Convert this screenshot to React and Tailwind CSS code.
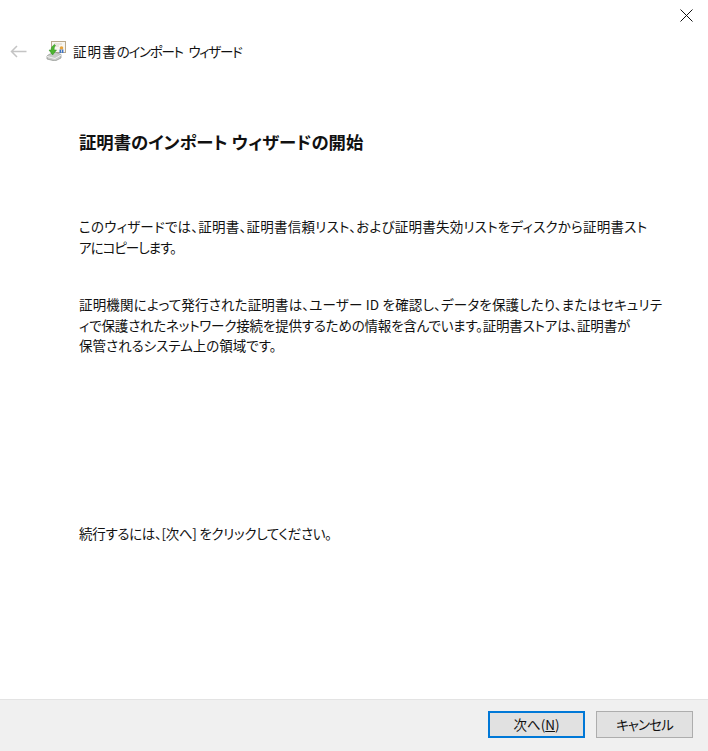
import React from "react";

const FONT = "font-['Noto_Sans_CJK_JP','Noto_Sans',sans-serif] [font-feature-settings:'palt']";

function WizardIcon() {
  return (
    <svg width="20" height="20" viewBox="0 0 20 20" className="block">
      {/* certificate */}
      <rect x="5.5" y="0.5" width="14" height="11" fill="#f8f6f0" stroke="#b9a98c" />
      <path d="M8 3h8M8 5h5" stroke="#d8d2c4" />
      <circle cx="15.5" cy="7" r="1.8" fill="#e8a33a" />
      <rect x="13.5" y="8.5" width="1.6" height="3.5" fill="#3f74c4" />
      <rect x="15.8" y="8.5" width="1.6" height="3.5" fill="#3f74c4" />
      {/* drive */}
      <path d="M3 13.5 L9 11 L15 13.5 L15 17 L9 20 L1 18 L1 15 Z" fill="#c9cbc8" stroke="#8d918d" strokeWidth="0.7" />
      <path d="M1 15.5 L9 17.5 L15 14" stroke="#f2f2f2" fill="none" />
      {/* green arrow */}
      <path d="M8.5 3.5 C6 5 5 7 5.2 9 L3 9 L6.6 14 L10.5 9 L8.2 9 C8 7.5 8.4 5.5 9.5 4.5 Z" fill="#4cb52f" stroke="#2f8f1d" strokeWidth="0.5" />
    </svg>
  );
}

export default function App() {
  return (
    <div className={`flex flex-col w-[708px] h-[751px] bg-white text-[#111] ${FONT}`}>
      {/* close button row */}
      <div className="flex justify-end h-[30px] pt-[9px] pr-[15px]">
        <svg width="13" height="13" viewBox="0 0 13 13" className="block">
          <path d="M0.5 0.5L12.5 12.5M12.5 0.5L0.5 12.5" stroke="#111" strokeWidth="1" fill="none" />
        </svg>
      </div>

      {/* title row */}
      <div className="flex items-center h-[42px] pl-[10px]">
        <svg width="17" height="13" viewBox="0 0 17 13" className="block">
          <path d="M16.5 6.5H1.5M7 1L1.5 6.5L7 12" stroke="#c4c4c4" strokeWidth="1.5" fill="none" />
        </svg>
        <div className="ml-[19px]">
          <WizardIcon />
        </div>
        <span className="ml-[7px] text-[13.5px] leading-[20px] whitespace-pre">
          <span className="tracking-[1.1px]">証明書</span>
          <span className="tracking-[-1.3px] [word-spacing:4px]">のインポート ウィザード</span>
        </span>
      </div>

      {/* content */}
      <div className="flex flex-col flex-1 pl-[79px] pr-[40px]">
        <h1 className="mt-[56px] text-[17.35px] leading-[28px] font-bold whitespace-pre">証明書のインポート ウィザードの開始</h1>
        <div className="mt-[60px] text-[13.5px] leading-[21px] whitespace-nowrap">
          <p className="tracking-[0.24px]">このウィザードでは、証明書、証明書信頼リスト、および証明書失効リストをディスクから証明書スト</p>
          <p className="tracking-[-1px]">アにコピーします。</p>
        </div>
        <div className="mt-[36px] text-[13.5px] leading-[20.5px] whitespace-nowrap">
          <p className="tracking-[0.18px]">証明機関によって発行された証明書は、ユーザー ID を確認し、データを保護したり、またはセキュリテ</p>
          <p className="tracking-[-0.19px]">ィで保護されたネットワーク接続を提供するための情報を含んでいます。証明書ストアは、証明書が</p>
          <p>保管されるシステム上の領域です。</p>
        </div>
        <p className="mt-[166px] text-[13.5px] leading-[22px] tracking-[-0.3px] whitespace-nowrap">続行するには、[次へ] をクリックしてください。</p>
      </div>

      {/* footer */}
      <div className="flex justify-end items-start gap-[11px] h-[52px] pt-[11px] pr-[15px] bg-[#f0f0f0] border-t border-[#e3e3e3]">
        <button className="w-[97px] h-[27px] flex items-center justify-center bg-[#e1e1e1] border-2 border-[#0078d7] text-[13.5px]">
          次へ(<span className="underline">N</span>)
        </button>
        <button className="w-[97px] h-[27px] flex items-center justify-center bg-[#e1e1e1] border border-[#adadad] text-[13.5px] tracking-[-0.9px]">
          キャンセル
        </button>
      </div>
    </div>
  );
}
